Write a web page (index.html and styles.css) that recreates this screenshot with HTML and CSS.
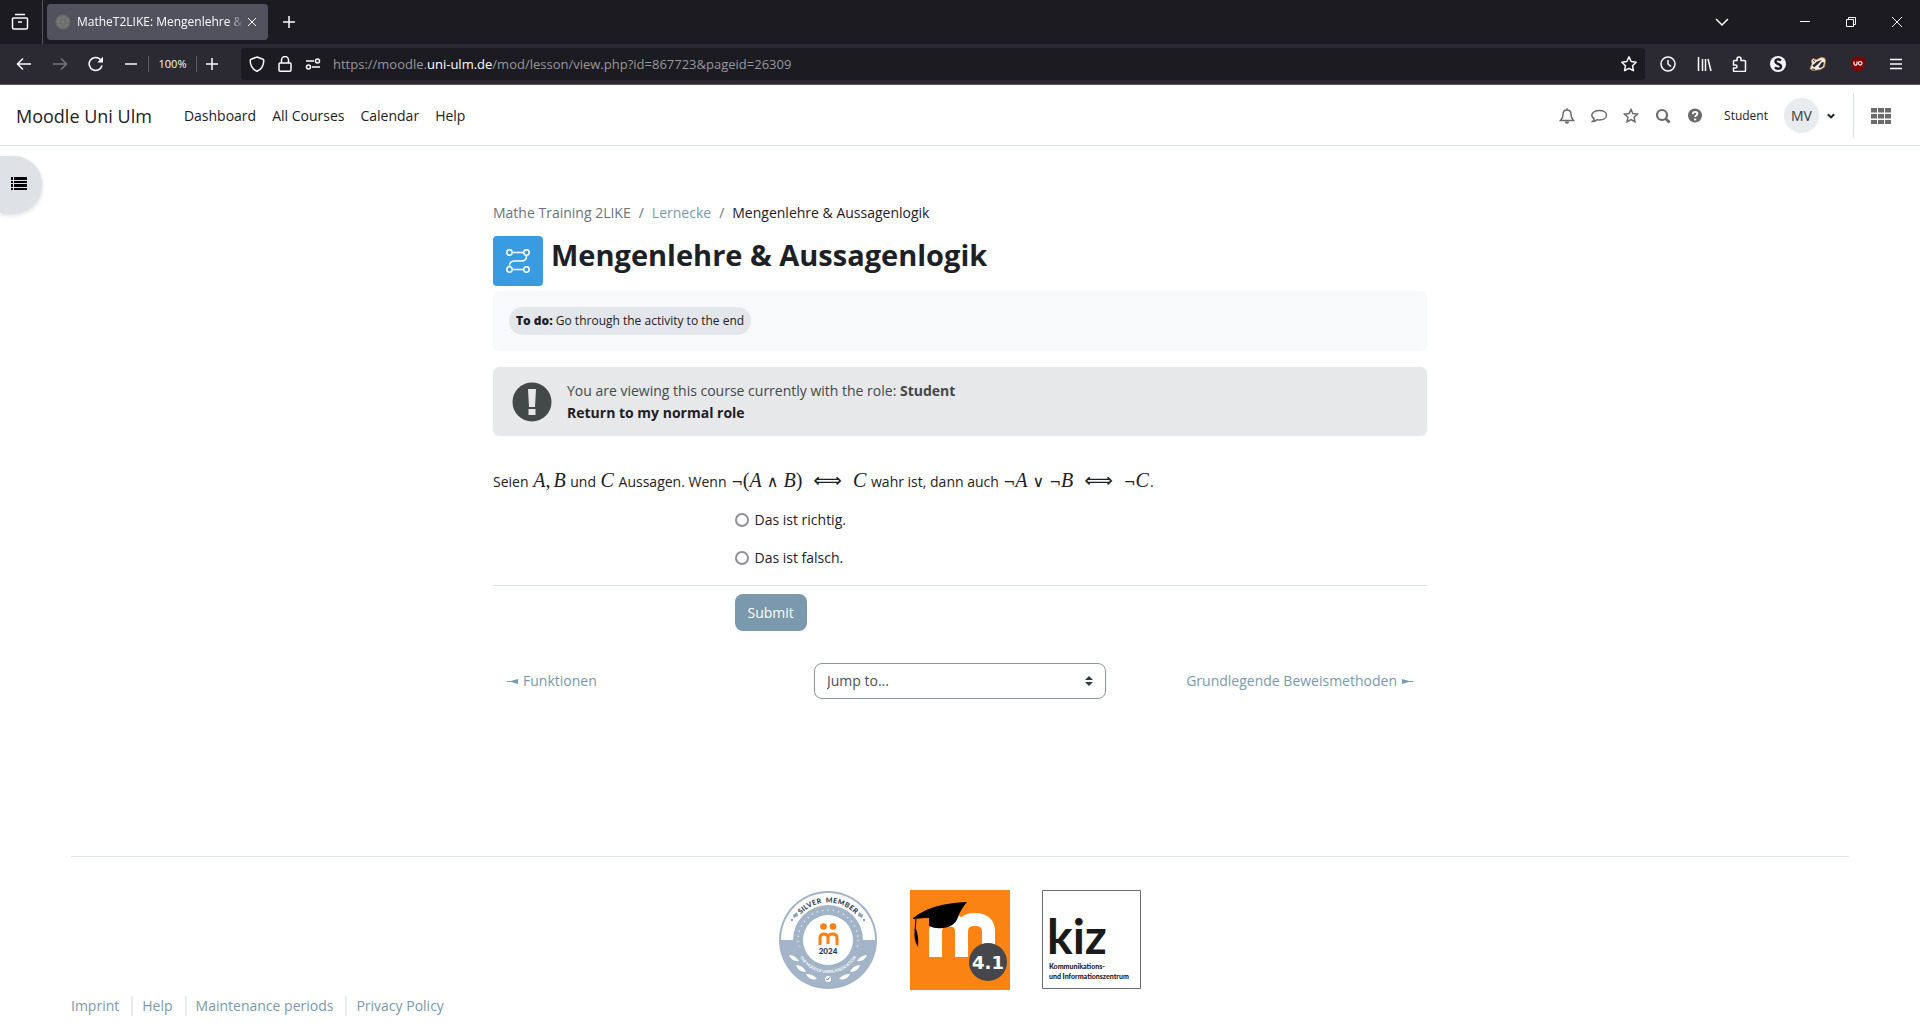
FILE: index.html
```html
<!DOCTYPE html>
<html lang="en">
<head>
<meta charset="utf-8">
<meta name="viewport" content="width=device-width, initial-scale=1">
<title>MatheT2LIKE: Mengenlehre &amp; Aussagenlogik</title>
<link rel="stylesheet" href="styles.css">
</head>
<body>
<div class="browser">
  <div class="tabbar">
    <button class="tool recent" aria-label="Recent browsing"><svg width="18" height="18" viewBox="0 0 18 18"><path d="M4 1.5h10M2.500 5h13a1 1 0 0 1 1 1v8.500a1.500 1.500 0 0 1-1.500 1.500H3a1.500 1.500 0 0 1-1.500-1.500V6a1 1 0 0 1 1-1zM7 9h4"/></svg></button>
    <div class="tab">
      <svg class="favicon" width="16" height="16" viewBox="0 0 16 16"><circle cx="8" cy="8" r="7.500" fill="#696969" stroke="none"/><circle cx="8" cy="8" r="5" fill="none" stroke="#858580" stroke-dasharray="1 1"/><path d="M8 2v12M2 8h12M4 4l8 8M12 4l-8 8" stroke="#7b7b78" stroke-dasharray="1 1"/></svg>
      <span class="tab-title">MatheT2LIKE: Mengenlehre &amp; Aussagenlogik</span>
      <button class="tab-close" aria-label="Close tab"><svg width="10" height="10" viewBox="0 0 10 10"><path d="M1 1l8 8M9 1L1 9"/></svg></button>
    </div>
    <button class="tool" aria-label="New tab"><svg width="14" height="14" viewBox="0 0 14 14"><path d="M7 1v12M1 7h12"/></svg></button>
    <div class="window-controls">
      <button class="list-tabs" aria-label="List all tabs"><svg width="14" height="14" viewBox="0 0 14 14"><path d="M1 4l6 6 6-6"/></svg></button>
      <button aria-label="Minimize"><svg width="10" height="10" viewBox="0 0 10 10"><path d="M0 4.500h10" stroke-width="1"/></svg></button>
      <button aria-label="Restore"><svg width="10" height="10" viewBox="0 0 10 10"><path d="M.5 2.500h7v7h-7zM2.500 2.500v-2h7v7h-2" stroke-width="1"/></svg></button>
      <button aria-label="Close"><svg width="10" height="10" viewBox="0 0 10 10"><path d="M0 0l10 10M10 0L0 10" stroke-width="1"/></svg></button>
    </div>
  </div>
  <div class="toolbar">
    <button class="tool" aria-label="Back"><svg width="16" height="16" viewBox="0 0 16 16"><path d="M15 8H2M7 2.500L1.500 8 7 13.500"/></svg></button>
    <button class="tool dim" aria-label="Forward"><svg width="16" height="16" viewBox="0 0 16 16"><path d="M1 8h13M9 2.500L14.500 8 9 13.500"/></svg></button>
    <button class="tool" aria-label="Reload"><svg width="16" height="16" viewBox="0 0 16 16"><path d="M14 9.500A6.500 6.500 0 1 1 12.500 3.500"/><path class="solid" d="M15 .8V6.500H9.300z"/></svg></button>
    <div class="zoom-box">
      <button aria-label="Zoom out"><svg width="12" height="12" viewBox="0 0 12 12"><path d="M0 6h12"/></svg></button>
      <span class="zoom-level">100%</span>
      <button class="zoom-in" aria-label="Zoom in"><svg width="12" height="12" viewBox="0 0 12 12"><path d="M6 0v12M0 6h12"/></svg></button>
    </div>
    <div class="urlbar">
      <svg width="16" height="16" viewBox="0 0 16 16"><path d="M8 1l6 2.300c.6.200.8.600.8 1.100C14.700 9.500 12 13.500 8 15.300 4 13.500 1.300 9.500 1.200 4.400c0-.5.200-.9.800-1.100z"/></svg>
      <svg width="16" height="16" viewBox="0 0 16 16"><path d="M3 7h10a1 1 0 0 1 1 1v6a1.200 1.200 0 0 1-1.200 1.200H3.200A1.200 1.200 0 0 1 2 14V8a1 1 0 0 1 1-1zM4.500 7V4a3.500 3.500 0 0 1 7 0v3"/></svg>
      <svg width="16" height="16" viewBox="0 0 16 16"><path d="M1 5h8M7 11h8"/><circle cx="12.500" cy="5" r="2"/><circle cx="3.500" cy="11" r="2"/></svg>
      <span class="url">https://moodle.<b>uni-ulm.de</b>/mod/lesson/view.php?id=867723&amp;pageid=26309</span>
      <svg width="16" height="16" viewBox="0 0 16 16"><path d="M8 .9l2.200 4.600 5 .7-3.700 3.500.9 5L8 12.300l-4.400 2.400.9-5L.8 6.200l5-.7z" stroke-linejoin="round"/></svg>
    </div>
    <div class="extensions">
      <button aria-label="History"><svg width="16" height="16" viewBox="0 0 16 16"><circle cx="8" cy="8" r="7"/><path d="M8 4v4l3 2.500"/></svg></button>
      <button aria-label="Library"><svg width="16" height="16" viewBox="0 0 16 16"><path d="M2.500 1v14M6.500 3v12M9.500 3v12M12 3l3 12"/></svg></button>
      <button aria-label="Extensions"><svg width="16" height="16" viewBox="0 0 16 16"><path d="M1.500 9V5.500a1 1 0 0 1 1-1H5V3a2 2 0 0 1 4 0v1.500h3.500a1 1 0 0 1 1 1v9a1 1 0 0 1-1 1h-10a1 1 0 0 1-1-1V12h2a1.500 1.500 0 0 0 0-3z"/></svg></button>
      <button class="wide" aria-label="Skip redirect"><svg width="16" height="16" viewBox="0 0 16 16"><circle cx="8" cy="8" r="8" fill="#f4f4f8" stroke="none"/><path d="M11 4.500C9 2.500 5.500 3 5.500 5.500c0 3 5.500 2 5.500 5 0 2.500-4 3-6 .7" stroke="#1c1b22" stroke-width="2.400"/></svg></button>
      <button class="wide" aria-label="Privacy Badger"><svg width="18" height="16" viewBox="0 0 18 16"><path d="M1 12.500L3 8 2.500 4l2-1.500L7 4l5-2.500L15.500 2l1 2.500L15.500 11l-4 2.500-8 1z" fill="#f3eee8" stroke="#c98540" stroke-width=".8"/><path d="M3.500 9.500L8 5.500 13 4l-5 5-3 2.500zM9.500 11L13 6l2 .5-1 4-3 1.500z" fill="#29272c" stroke="none"/><path d="M4 4.500l2 1M3 13l3 .5" stroke="#29272c" stroke-width="1"/></svg></button>
      <button class="wide" aria-label="uBlock Origin"><svg width="16" height="16" viewBox="0 0 16 16"><path d="M8 0c2 1.500 4.500 2 7 2v5c0 5-3 7.500-7 9-4-1.500-7-4-7-9V2c2.500 0 5-.5 7-2z" fill="#800000" stroke="none"/><path d="M4 5.500v2.200a1.500 1.500 0 0 0 3 0V5.500" stroke-width="1.200"/><circle cx="10.200" cy="7.300" r="1.800" stroke-width="1.200"/></svg></button>
      <button class="wide" aria-label="Menu"><svg width="12" height="12" viewBox="0 0 12 12"><path d="M0 1.500h12M0 6h12M0 10.500h12"/></svg></button>
    </div>
  </div>
</div>

<header class="navbar">
  <a class="brand" href="#">Moodle Uni Ulm</a>
  <nav class="primary">
    <a href="#">Dashboard</a><a href="#">All Courses</a><a href="#">Calendar</a><a href="#">Help</a>
  </nav>
  <div class="user-tools">
    <button class="nav-icon" aria-label="Notifications"><svg width="16" height="16" viewBox="0 0 16 16"><path d="M8 2C5.200 2 4 4.200 4 6.500 4 9.500 3 11 1.500 12.500h13C13 11 12 9.500 12 6.500 12 4.200 10.800 2 8 2zM8 .3V2"/><path class="solid" d="M5.800 13.500h4.400a2.200 2.200 0 0 1-4.400 0z"/></svg></button>
    <button class="nav-icon" aria-label="Messages"><svg width="18" height="16" viewBox="0 0 18 16"><path d="M9.500 2.500c4 0 7 2 7 4.700s-3 4.700-7 4.700c-.8 0-1.600-.1-2.300-.3-1.200 1-2.700 1.700-4.500 1.800.9-.8 1.300-1.700 1.400-2.700C2.700 9.900 1.800 8.600 1.800 7.200c0-2.700 3.400-4.700 7.700-4.700z"/></svg></button>
    <button class="nav-icon" aria-label="Bookmarks"><svg width="16" height="16" viewBox="0 0 16 16"><path d="M8 1.500l1.900 4.100 4.500.5-3.300 3.100.8 4.500L8 11.500l-3.900 2.200.8-4.500L1.600 6.100l4.500-.5z"/></svg></button>
    <button class="nav-icon" aria-label="Search"><svg width="16" height="16" viewBox="0 0 16 16"><circle cx="7" cy="7" r="5" stroke-width="2.200"/><path d="M10.500 10.500l4 4" stroke-width="2.600"/></svg></button>
    <button class="nav-icon" aria-label="Help"><svg width="16" height="16" viewBox="0 0 16 16"><circle class="solid" cx="8" cy="7.500" r="7"/><path d="M5.800 6c0-3 4.600-2.700 4.600-.3C10.400 7.300 8.200 7.200 8.200 9" stroke="#fff" stroke-width="1.900"/><path d="M7.100 10.500h2.100v1.900H7.100z" fill="#fff" stroke="none"/></svg></button>
    <span class="role">Student</span>
    <button class="user-menu" aria-label="User menu"><span class="avatar">MV</span><svg width="8" height="6" viewBox="0 0 8 6"><path d="M.8 1.200L4 4.400l3.200-3.200"/></svg></button>
    <button class="apps" aria-label="Applications"><svg width="20" height="16" viewBox="0 0 20 16"><path d="M0 0h6v4.500H0zM7 0h6v4.500H7zM14 0h6v4.500h-6zM0 6h6v4.500H0zM7 6h6v4.500H7zM14 6h6v4.500h-6zM0 12h6v4H0zM7 12h6v4H7zM14 12h6v4h-6z"/></svg></button>
  </div>
</header>

<button class="drawer-toggle" aria-label="Open course index"><svg width="16" height="13" viewBox="0 0 16 13"><path d="M0 0h2v3H0zM3 0h13v3H3zM0 4h2v2H0zM3 4h13v2H3zM0 7h2v3H0zM3 7h13v3H3zM0 11h2v2H0zM3 11h13v2H3z"/></svg></button>

<main class="page">
  <nav class="breadcrumb" aria-label="Breadcrumb">
    <span class="muted">Mathe Training 2LIKE</span><span class="muted">/</span><a href="#">Lernecke</a><span class="muted">/</span><span>Mengenlehre &amp; Aussagenlogik</span>
  </nav>
  <div class="title-row">
    <span class="activity-icon"><svg width="24" height="24" viewBox="0 0 24 24"><circle cx="3.500" cy="3.500" r="2.700"/><circle cx="20.500" cy="3.500" r="2.700"/><circle cx="3.500" cy="20.500" r="2.700"/><circle cx="20.500" cy="20.500" r="2.700"/><path d="M6.200 3.500h11.600M20.500 6.200v1.300a4.500 4.500 0 0 1-4.500 4.500H8a4.500 4.500 0 0 0-4.500 4.500v1.300M6.200 20.500h11.600"/></svg></span>
    <h1>Mengenlehre &amp; Aussagenlogik</h1>
  </div>
  <div class="activity-info"><span class="pill"><strong>To do:</strong> Go through the activity to the end</span></div>
  <div class="alert">
    <svg width="40" height="40" viewBox="0 0 40 40"><circle cx="20" cy="20" r="19.500" fill="#434849"/><path d="M16 7h8l-1 18h-6zM16.500 27h7v6h-7z" fill="#e7e8ea"/></svg>
    <div>You are viewing this course currently with the role: <strong>Student</strong><br><a href="#">Return to my normal role</a></div>
  </div>
  <form class="question">
    <p class="statement">Seien <span class="math"><i>A</i>,<i class="thin">B</i></span> und <span class="math"><i>C</i></span> Aussagen. Wenn <span class="math"><span class="op">¬</span>(<i>A</i><span class="op bin">∧</span><i>B</i>)<span class="op arrow">⟺</span><i>C</i></span> wahr ist, dann auch <span class="math"><span class="op">¬</span><i>A</i><span class="op bin">∨</span><span class="op">¬</span><i>B</i><span class="op arrow">⟺</span><span class="op">¬</span><i>C</i></span>.</p>
    <div class="answers">
      <label><input type="radio" name="answer">Das ist richtig.</label>
      <label><input type="radio" name="answer">Das ist falsch.</label>
    </div>
    <div class="submit-row"><button class="submit" type="button">Submit</button></div>
  </form>
  <div class="activity-nav">
    <a href="#"><svg width="11" height="5" viewBox="0 0 11 5"><path d="M0 2h4l7-2v5L4 3H0z"/></svg>Funktionen</a>
    <select aria-label="Jump to"><option>Jump to...</option></select>
    <a class="next" href="#">Grundlegende Beweismethoden<svg width="11" height="5" viewBox="0 0 11 5"><path d="M11 2H7L0 0v5l7-2h4z"/></svg></a>
  </div>
</main>

<footer class="footer">
  <div class="logos">
    <svg width="100" height="100" viewBox="-1 -1 100 100" role="img" aria-label="Moodle Users Association silver member 2024">
      <defs><path id="arc-top" d="M14.500 49a34.500 34.500 0 0 1 69 0"/><path id="arc-bottom" d="M16 49a33 33 0 0 0 66 0"/></defs>
      <circle cx="49" cy="49" r="49" fill="#a3b4c8"/>
      <path d="M2 49a47 47 0 0 1 94 0z" fill="#fff"/>
      <circle cx="49" cy="49" r="35" fill="#a3b4c8"/>
      <circle cx="49" cy="49" r="30" fill="none" stroke="#e3e9ef" stroke-width="1.400" stroke-dasharray="1.400 4"/>
      <path d="M18 56a31 31 0 0 0 62 0z" fill="#a3b4c8"/>
      <circle cx="49" cy="49" r="25" fill="#fff"/>
      <text class="seal-name" dy="-3"><textPath href="#arc-top" startOffset="50%">SILVER  MEMBER</textPath></text>
      <text class="seal-org"><textPath href="#arc-bottom" startOffset="50%">THE MOODLE USERS ASSOCIATION</textPath></text>
      <g fill="#f98012"><circle cx="44.500" cy="35.500" r="3.300"/><circle cx="54" cy="35.500" r="3.300"/></g>
      <path d="M41 54v-7q0-4 4-4t4 4v6M49 47q0-4 4.500-4t4.500 4v7" fill="none" stroke="#f98012" stroke-width="3"/>
      <text class="seal-year" x="49" y="63">2024</text>
      <g fill="#fff"><path d="M10 64q6 0 10 6-7 1-10-6zM17 74q7 0 10 7-8 0-10-7zM27 83q7 0 11 5-8 2-11-5zM88 64q-6 0-10 6 7 1 10-6zM81 74q-7 0-10 7 8 0 10-7zM71 83q-7 0-11 5 8 2 11-5z"/><circle cx="49" cy="88" r="3"/></g>
      <path d="M47.500 88l1 1 2-2.500" fill="none" stroke="#5a6c82"/>
      <g fill="#8ea3bb"><path d="M14 24l4-3 1 4-4 2zM84 24l-4-3-1 4 4 2z"/><circle cx="13" cy="29" r="1.200"/><circle cx="85" cy="29" r="1.200"/></g>
    </svg>
    <svg width="100" height="100" viewBox="0 0 100 100" role="img" aria-label="Moodle 4.1">
      <path fill="#fb8314" d="M0 0h100v100H0z"/>
      <path d="M25.500 67V42q0-12 13-12t13 12v25M51.500 67V42q0-12.500 13.500-12.500T78.500 42v14" fill="none" stroke="#fff" stroke-width="13"/>
      <path fill="#fb8314" d="M4 20h15v12H4zM19 22h13v12H19z"/>
      <path d="M19 27l30-3q-3 13-16 14-8 1-14-2zM3 28Q22 13 57 12q-6 7-10 17-18-3-44 0z"/>
      <path d="M6 29l-1 12" stroke="#000"/><path d="M5 39q-2 10 3 18 1-10-2-18z"/>
      <circle cx="78" cy="72" r="19" fill="#46474b"/>
      <text class="version" x="78" y="79">4.1</text>
    </svg>
    <svg width="100" height="100" viewBox="0 0 100 100" role="img" aria-label="kiz">
      <path d="M.5 .5h98v98H.5z" fill="#fff" stroke="#6b6b6b"/>
      <text class="kiz-name" x="5" y="64">kiz</text>
      <text class="kiz-sub" x="7" y="79">Kommunikations-</text>
      <text class="kiz-sub" x="7" y="89">und Informationszentrum</text>
    </svg>
  </div>
  <nav class="footer-links"><a href="#">Imprint</a><a href="#">Help</a><a href="#">Maintenance periods</a><a href="#">Privacy Policy</a></nav>
</footer>
</body>
</html>
```
FILE: styles.css
```css
* { box-sizing: border-box; }
body {
  margin: 0;
  background: #fff;
  color: #1d2125;
  font: 14px/22px "Open Sans", "Noto Sans", sans-serif;
}
a { color: #7a99ac; text-decoration: none; }
button {
  display: inline-flex;
  align-items: center;
  justify-content: center;
  padding: 0;
  border: 0;
  background: none;
  color: inherit;
  font: inherit;
}
svg { flex: none; }

/* Browser window */
.browser { color: #fbfbfe; border-bottom: 1px solid #5a5365; }
.browser svg { fill: none; stroke: currentColor; stroke-width: 1.5; }
.browser .solid { fill: currentColor; stroke: none; }
.tabbar { display: flex; align-items: center; height: 44px; background: #1c1b22; }
.tool { width: 36px; height: 36px; }
.tool.dim { color: #77767e; }
.tool.recent { width: 43px; height: 44px; padding-right: 2px; border-right: 1px solid #55545c; }
.tab {
  display: flex;
  align-items: center;
  width: 221px;
  height: 36px;
  margin: 0 3px 0 4px;
  padding: 0 8px;
  border-radius: 4px;
  background: #52525e;
  font-size: 12px;
}
.tab-title {
  flex: 1;
  margin-left: 6px;
  overflow: hidden;
  white-space: nowrap;
  mask-image: linear-gradient(to left, transparent, #000 16px);
}
.tab-close { width: 16px; height: 24px; }
.tab-close svg { stroke-width: 1; }
.window-controls { display: flex; margin-left: auto; }
.window-controls button { width: 46px; height: 44px; }
.window-controls .list-tabs { width: 36px; margin-right: 42px; }
.toolbar {
  display: flex;
  align-items: center;
  height: 40px;
  padding: 0 6px;
  background: #2b2a33;
}
.zoom-box { display: flex; align-items: center; width: 127px; font-size: 11px; }
.zoom-box button { width: 34px; height: 32px; }
.zoom-box .zoom-in { width: 30px; }
.zoom-level {
  width: 49px;
  line-height: 16px;
  border: 1px solid #5b5a63;
  border-width: 0 1px;
  text-align: center;
}
.urlbar {
  display: flex;
  flex: 1;
  align-items: center;
  gap: 12px;
  min-width: 0;
  height: 32px;
  padding: 0 8px;
  border-radius: 4px;
  background: #1c1b22;
}
.url { flex: 1; overflow: hidden; color: #97969c; font-size: 13px; line-height: 24px; white-space: nowrap; }
.url b { color: #fbfbfe; font-weight: 400; }
.extensions { display: flex; margin-left: 5px; }
.extensions button { width: 36px; height: 36px; }
.extensions .wide { width: 40px; }
.extensions .wide:last-child { width: 36px; }

/* Site navigation */
.navbar {
  display: flex;
  align-items: center;
  height: 61px;
  padding: 1px 16px 0;
  border-bottom: 1px solid #dee2e6;
}
.navbar a { color: #1d2125; }
.brand { font-size: 18px; }
.primary { display: flex; gap: 16px; margin-left: 32px; }
.user-tools { display: flex; align-items: center; margin-left: auto; }
.nav-icon { width: 32px; height: 32px; color: #6a6a6a; }
.nav-icon svg { fill: none; stroke: currentColor; stroke-width: 1.5; }
.nav-icon .solid { fill: currentColor; stroke: none; }
.role { margin: 0 16px 0 13px; font-size: 12px; }
.avatar {
  width: 35px;
  height: 35px;
  border-radius: 50%;
  background: #e9ecef;
  color: #343a40;
  line-height: 35px;
}
.user-menu { gap: 8px; }
.user-menu svg { fill: none; stroke: #1d2125; stroke-width: 2; }
.apps { height: 45px; margin-left: 18px; padding: 0 13px 0 17px; border-left: 1px solid #dee2e6; fill: #6a6a6a; }

.drawer-toggle {
  position: absolute;
  top: 156px;
  left: 0;
  width: 42px;
  height: 57px;
  padding: 0 4px 2px 0;
  border-radius: 0 28px 28px 0;
  background: #dee2e6;
  box-shadow: 0 2px 4px #00000026;
}

/* Course page */
.page { max-width: 966px; margin: 0 auto; padding: 56px 16px 0; }
.breadcrumb { display: flex; gap: 8px; }
.muted { color: #6a737b; }
.title-row { display: flex; gap: 8px; margin-top: 12px; }
.activity-icon {
  display: grid;
  place-items: center;
  width: 50px;
  height: 50px;
  border-radius: 4px;
  background: #399be2;
}
.activity-icon svg { fill: none; stroke: #fff; stroke-width: 1.5; }
h1 { margin: 0; font-size: 29px; line-height: 38px; }
.activity-info { margin-top: 5px; padding: 16px; border-radius: 6px; background: #f8f9fa; }
.pill {
  display: inline-block;
  height: 28px;
  padding: 0 7px;
  border-radius: 14px;
  background: #e3e6ea;
  font-size: 12px;
  line-height: 28px;
  vertical-align: top;
}
.pill strong { font-weight: 800; }
.alert {
  display: flex;
  gap: 15px;
  align-items: center;
  margin-top: 16px;
  padding: 13px 19px 12px;
  border-radius: 6px;
  background: #e7e8ea;
  color: #434849;
}
.alert a { color: #1d2125; font-weight: 700; }
.statement { margin: 34px 0 15px; line-height: 24px; }
.math { margin: 0 1px; font: 20px/20px "Liberation Serif", serif; }
.thin { margin-left: 3px; }
.op { font: 14px/20px "DejaVu Sans", sans-serif; }
.bin { margin: 0 5px; font-size: 16px; }
.arrow { margin: 0 11px; font-size: 20px; }
.answers { display: grid; gap: 16px; padding: 0 0 16px calc(25% + 8px); }
.answers label { display: flex; gap: 6px; align-items: center; }
.answers input {
  appearance: none;
  width: 14px;
  height: 14px;
  margin: 0;
  border: 2px solid #8f8f9d;
  border-radius: 50%;
}
.submit-row { padding: 8px 0 0 calc(25% + 8px); border-top: 1px solid #dee2e6; }
.submit { height: 37px; padding: 0 13px; border-radius: 8px; background: #7a99ac; color: #fff; }
.activity-nav {
  display: grid;
  grid-template-columns: 1fr 292px 1fr;
  align-items: center;
  margin-top: 32px;
  padding: 0 14px;
}
.activity-nav a { display: flex; gap: 5px; align-items: center; fill: #7a99ac; }
.activity-nav .next { justify-content: flex-end; }
select {
  appearance: none;
  height: 36px;
  padding: 0 12px;
  border: 1px solid #8f959e;
  border-radius: 8px;
  background: #fff url("data:image/svg+xml,%3Csvg xmlns='http://www.w3.org/2000/svg' width='8' height='10' viewBox='0 0 8 10'%3E%3Cpath fill='%23343a40' d='M4 0L0 4h8zM0 6h8l-4 4z'/%3E%3C/svg%3E") no-repeat right 12px center;
  color: #495057;
  font: inherit;
}

/* Footer */
.footer { margin: 157px 71px 0; border-top: 1px solid #dee2e6; }
.logos { display: flex; justify-content: center; align-items: center; gap: 32px; margin-top: 33px; }
.seal-name { fill: #2b3a4a; font: 900 7px Lato, sans-serif; text-anchor: middle; white-space: pre; }
.seal-org { fill: #fff; font: 700 4px Lato, sans-serif; text-anchor: middle; }
.seal-year { fill: #24384c; font: 900 8px Lato, sans-serif; text-anchor: middle; }
.version { fill: #fff; font: 700 18px "DejaVu Sans", sans-serif; text-anchor: middle; }
.kiz-name { fill: #1a1a1a; font: 700 48px Lato, sans-serif; }
.kiz-sub { fill: #1a1a1a; font: 900 7px Lato, sans-serif; }
.footer-links { display: flex; margin-top: 6px; line-height: 20px; }
.footer-links a + a { margin-left: 12px; padding-left: 9px; border-left: 2px solid #e9ecef; }
```
